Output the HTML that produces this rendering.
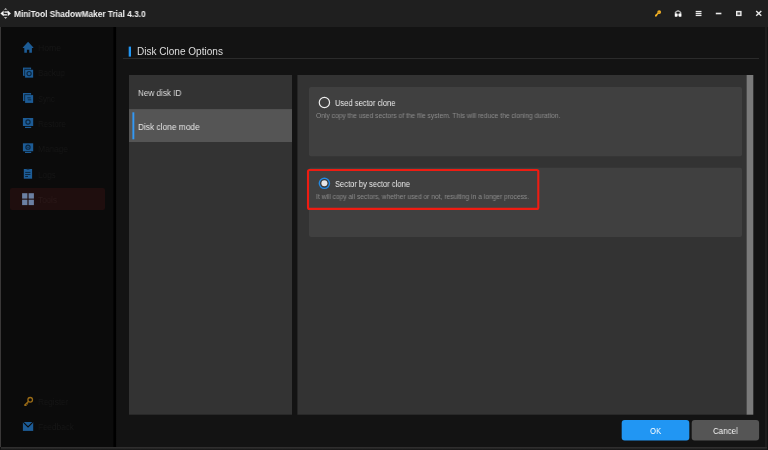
<!DOCTYPE html>
<html>
<head>
<meta charset="utf-8">
<title>MiniTool ShadowMaker Trial 4.3.0</title>
<style>
*{margin:0;padding:0;box-sizing:border-box;}
html,body{width:768px;height:450px;overflow:hidden;background:#131313;font-family:"Liberation Sans",sans-serif;}
#app{position:relative;width:768px;height:450px;background:#131313;overflow:hidden;}
.a{position:absolute;}
.t{position:absolute;line-height:1;white-space:nowrap;transform-origin:0 0;display:block;will-change:transform;}
svg{position:absolute;left:0;top:0;overflow:visible;}
</style>
</head>
<body>
<div id="app">
<div class="a" style="left:0;top:0;width:768px;height:27px;background:#1f1f1f"></div>
<div class="a" style="left:0;top:27px;width:114px;height:420px;background:#0b0b0b"></div>
<div class="a" style="left:113px;top:27px;width:4px;height:420px;background:linear-gradient(to right,#080808 0,#000 1px,#000 2.6px,#101010 3.4px,#131313 4px)"></div>
<div class="a" style="left:0;top:27px;width:1px;height:420px;background:#3a3838"></div>
<div class="a" style="left:765px;top:27px;width:2px;height:421px;background:#1d1d1d"></div>
<div class="a" style="left:1px;top:447px;width:766px;height:3px;background:linear-gradient(to bottom,#302f2f 0,#2e2d2d 1.2px,#1b1b1b 1.9px,#181818 3px)"></div>
<div class="a" style="left:10px;top:188px;width:95px;height:22px;background:#1f0e0e;border-radius:2px"></div>
<div class="a" style="left:123px;top:58px;width:636px;height:1px;background:#2b2b2b"></div>
<svg width="768" height="450" viewBox="0 0 768 450">
<!-- panels -->
<rect x="129" y="75" width="163" height="339.7" fill="#333"/>
<rect x="129" y="109.1" width="163" height="32.9" fill="#555"/>
<rect x="297.4" y="75" width="449.4" height="339.7" fill="#333"/>
<rect x="746.6" y="75" width="6.7" height="339.7" fill="#7a7a7a"/>
<rect x="309" y="86.9" width="433" height="69.3" rx="2" fill="#404040"/>
<rect x="309" y="167.8" width="433" height="69.1" rx="2" fill="#404040"/>
<rect x="621.7" y="420" width="67.6" height="20.4" rx="3" fill="#2196f3"/>
<rect x="691.7" y="420" width="67.4" height="20.4" rx="3" fill="#555"/>
<!-- title app icon -->
<g fill="#b8b8b8">
<polygon points="5.6,7.9 3.9,9.8 7.3,9.8"/>
<polygon points="5.6,19.0 3.9,17.1 7.3,17.1"/>
</g>
<g fill="#f4f4f4">
<polygon points="0.4,13.4 3.6,10.6 3.6,16.2"/>
<polygon points="10.9,13.4 7.7,10.6 7.7,16.2"/>
<rect x="4.4" y="11.4" width="3.8" height="1.3"/>
<rect x="3.1" y="14.2" width="3.8" height="1.3"/>
</g>
<!-- key -->
<circle cx="659.2" cy="12.1" r="1.9" fill="#f2b024"/>
<path d="M658.1 13.2 L655.8 15.6" stroke="#f2b024" stroke-width="1.5" fill="none" stroke-linecap="round"/>
<ellipse cx="656.2" cy="15.4" rx="1.25" ry="0.95" transform="rotate(-40 656.2 15.4)" fill="#f2b024"/>
<circle cx="658.9" cy="12.3" r="0.55" fill="#a87a18"/>
<!-- headset -->
<path d="M674.8 16.6 V12.4 Q674.9 11.0 678.05 9.9 Q681.2 11.0 681.3 12.4 V16.6 Z" fill="#b4b4b4"/>
<rect x="674.9" y="13.6" width="2.5" height="3.0" fill="#ffffff"/>
<rect x="678.8" y="13.6" width="2.5" height="3.0" fill="#ffffff"/>
<rect x="677.4" y="13.9" width="1.4" height="2.1" fill="#a4a4a4"/>
<ellipse cx="678.05" cy="12.75" rx="1.75" ry="0.9" fill="#161616"/>
<rect x="677.3" y="15.9" width="1.6" height="0.8" fill="#1f1f1f"/>
<!-- hamburger -->
<g fill="#e9e9e9">
<rect x="695.7" y="10.9" width="5.8" height="1.3"/>
<rect x="695.7" y="12.85" width="5.8" height="1.3"/>
<rect x="695.7" y="14.8" width="5.8" height="1.3"/>
<rect x="715.8" y="12.7" width="5.6" height="1.6"/>
</g>
<rect x="736.7" y="11.6" width="4.2" height="3.8" fill="#4a4a4a" stroke="#e9e9e9" stroke-width="1.4"/>
<path d="M756.2 11 L761.3 15.8 M761.3 11 L756.2 15.8" stroke="#e9e9e9" stroke-width="1.4" fill="none"/>
<!-- header blue bar / selection bar -->
<rect x="128.7" y="46.6" width="2.3" height="10" fill="#2196f3"/>
<rect x="132.4" y="112.3" width="1.9" height="27" fill="#3399f5"/>
<!-- home -->
<g fill="#1d5c96">
<polygon points="28.1,41.8 33.4,47.4 33.4,48.1 22.8,48.1 22.8,47.4"/>
<path d="M24.3 47.6 H31.9 V52.7 H29.3 V49.7 H26.9 V52.7 H24.3 Z"/>
</g>
<!-- backup -->
<rect x="23.5" y="68.1" width="7.1" height="7.2" fill="#164876" stroke="#1d5c96" stroke-width="1"/>
<rect x="24.6" y="69.3" width="8.8" height="8.6" fill="#0a1520"/>
<rect x="25.1" y="69.8" width="8.0" height="7.8" fill="#1d5c96"/>
<circle cx="29.1" cy="73.6" r="2.1" fill="none" stroke="#0b2640" stroke-width="1.15"/>
<!-- sync -->
<rect x="23.5" y="93.5" width="7.1" height="7.1" fill="#164876" stroke="#1d5c96" stroke-width="1"/>
<rect x="24.6" y="94.6" width="8.8" height="8.6" fill="#0a1520"/>
<rect x="25.1" y="95.1" width="8.0" height="7.8" fill="#1d5c96"/>
<rect x="27.3" y="97.2" width="3.4" height="1.2" fill="#0f3557"/>
<rect x="27.8" y="99.2" width="3.4" height="1.2" fill="#0f3557"/>
<!-- restore -->
<rect x="22.9" y="118" width="10.3" height="8" fill="#1d5c96"/>
<rect x="25" y="126.8" width="6.2" height="1.2" fill="#1d5c96"/>
<circle cx="28" cy="122" r="2.1" fill="none" stroke="#0b2640" stroke-width="1.15"/>
<!-- manage -->
<rect x="22.9" y="143.3" width="10.3" height="8" fill="#1d5c96"/>
<rect x="25" y="151.8" width="6.2" height="1.2" fill="#1d5c96"/>
<circle cx="28" cy="147.2" r="2.1" fill="none" stroke="#0b2640" stroke-width="1.15"/>
<circle cx="28" cy="147.2" r="0.8" fill="#0d2c48"/>
<!-- logs -->
<rect x="23.8" y="169.0" width="8.3" height="9.7" fill="#1d5c96"/>
<rect x="26.6" y="168.8" width="2.8" height="1.0" fill="#103456"/>
<g fill="#0c2740">
<rect x="25.2" y="171.9" width="5.2" height="1.0"/>
<rect x="25.2" y="174.0" width="5.2" height="1.0"/>
<rect x="25.2" y="176.0" width="2.8" height="1.0"/>
</g>
<!-- tools -->
<g fill="#6b80a2">
<rect x="22.1" y="193.2" width="5.3" height="5.4"/>
<rect x="28.6" y="193.2" width="5.3" height="5.4"/>
<rect x="22.1" y="199.7" width="5.3" height="5.4"/>
<rect x="28.6" y="199.7" width="5.3" height="5.4"/>
</g>
<!-- register key -->
<circle cx="30.2" cy="399.8" r="2.3" fill="none" stroke="#9a6b16" stroke-width="1.3"/>
<path d="M28.4 401.6 L24.3 405.4 M25.5 404.3 L26.6 405.5 M26.9 403.1 L27.9 404.2" stroke="#9a6b16" stroke-width="1.3" fill="none"/>
<!-- feedback -->
<rect x="22.9" y="422" width="10.3" height="8.9" fill="#1d5c96"/>
<path d="M23.2 422.2 L28.05 426.9 L32.9 422.2" fill="none" stroke="#0b0b0b" stroke-width="1.1"/>
<!-- radios -->
<circle cx="324.4" cy="102.5" r="5.15" fill="none" stroke="#ececec" stroke-width="1.2"/>
<circle cx="324.4" cy="183.3" r="5.1" fill="#3a3a3a" stroke="#2389e2" stroke-width="1.4"/>
<circle cx="324.4" cy="183.3" r="3.0" fill="#e6e6e6"/>
<!-- red highlight -->
<rect x="308.0" y="170.0" width="230.3" height="38.9" rx="1.5" fill="none" stroke="#ee1c12" stroke-width="2.1"/>
</svg>
<span class="t" style="left:14.00px;top:9.62px;font-size:8.6px;color:#f4f4f4;transform:scaleX(0.9651);font-weight:bold;">MiniTool ShadowMaker Trial 4.3.0</span>
<span class="t" style="left:38.20px;top:44.12px;font-size:8.6px;color:#171717;transform:scaleX(1.0026);">Home</span>
<span class="t" style="left:38.20px;top:69.42px;font-size:8.6px;color:#171717;transform:scaleX(0.9413);">Backup</span>
<span class="t" style="left:38.20px;top:94.72px;font-size:8.6px;color:#171717;transform:scaleX(0.8787);">Sync</span>
<span class="t" style="left:38.20px;top:120.02px;font-size:8.6px;color:#171717;transform:scaleX(0.9265);">Restore</span>
<span class="t" style="left:38.20px;top:145.32px;font-size:8.6px;color:#171717;transform:scaleX(0.9685);">Manage</span>
<span class="t" style="left:38.20px;top:170.62px;font-size:8.6px;color:#171717;transform:scaleX(0.9544);">Logs</span>
<span class="t" style="left:38.20px;top:195.92px;font-size:8.6px;color:#2b1a1a;transform:scaleX(0.9563);">Tools</span>
<span class="t" style="left:38.30px;top:398.12px;font-size:8.6px;color:#171717;transform:scaleX(0.9430);">Register</span>
<span class="t" style="left:38.30px;top:423.32px;font-size:8.6px;color:#171717;transform:scaleX(0.9479);">Feedback</span>
<span class="t" style="left:137.10px;top:47.14px;font-size:10px;color:#dedede;transform:scaleX(1.0036);">Disk Clone Options</span>
<span class="t" style="left:137.70px;top:87.94px;font-size:9.4px;color:#dcdcdc;transform:scaleX(0.8675);">New disk ID</span>
<span class="t" style="left:137.70px;top:121.54px;font-size:9.4px;color:#e6e6e6;transform:scaleX(0.8908);">Disk clone mode</span>
<span class="t" style="left:334.90px;top:99.35px;font-size:8.8px;color:#ececec;transform:scaleX(0.8590);">Used sector clone</span>
<span class="t" style="left:334.90px;top:180.05px;font-size:8.8px;color:#ececec;transform:scaleX(0.8603);">Sector by sector clone</span>
<span class="t" style="left:315.60px;top:112.94px;font-size:6.8px;color:#8c8c8c;transform:scaleX(0.9840);">Only copy the used sectors of the file system. This will reduce the cloning duration.</span>
<span class="t" style="left:315.80px;top:194.14px;font-size:6.8px;color:#8c8c8c;transform:scaleX(0.9755);">It will copy all sectors, whether used or not, resulting in a longer process.</span>
<span class="t" style="left:650.10px;top:426.81px;font-size:9.2px;color:#ffffff;transform:scaleX(0.8351);">OK</span>
<span class="t" style="left:712.80px;top:426.85px;font-size:8.8px;color:#f4f4f4;transform:scaleX(0.9053);">Cancel</span>
</div>
</body>
</html>
